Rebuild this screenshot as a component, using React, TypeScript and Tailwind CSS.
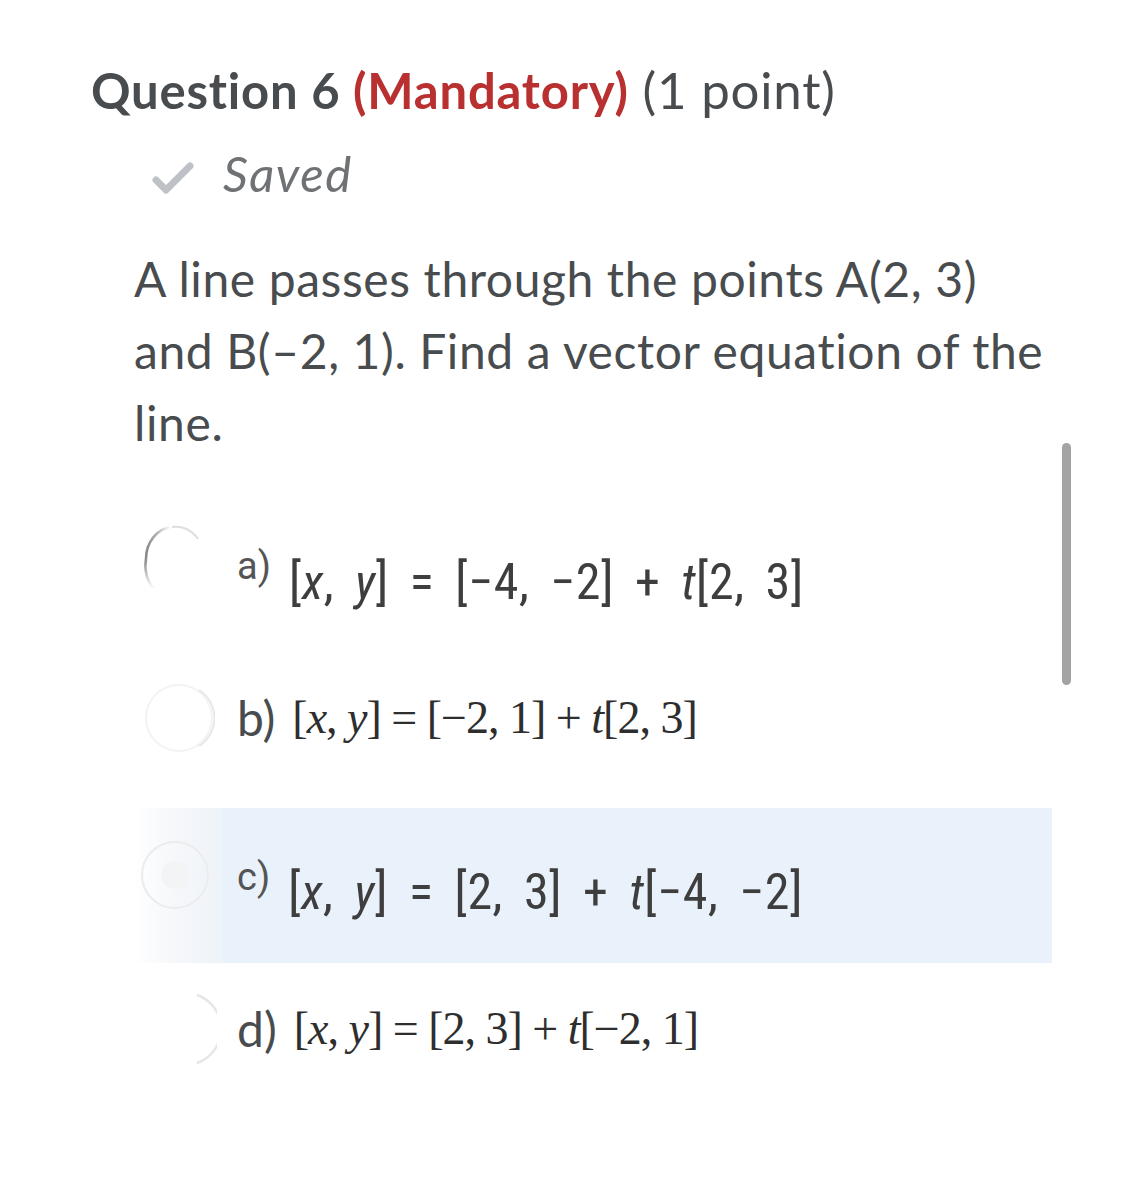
import React from "react";

const lato = { fontFamily: "Lato, 'Noto Sans', sans-serif" };

function MathSans({ children }: { children: React.ReactNode }) {
  return (
    <span
      className="text-[50px] leading-none text-[#3e3e3e] whitespace-pre tracking-[0.5px] [word-spacing:9px]"
      style={{ fontFamily: "'Liberation Sans Narrow', 'Roboto Condensed', Roboto, sans-serif" }}
    >
      {children}
    </span>
  );
}

function MathSerif({ children }: { children: React.ReactNode }) {
  return (
    <span
      className="text-[46px] leading-none text-[#2e2e2e] whitespace-pre tracking-[-1px]"
      style={{ fontFamily: "'Liberation Serif', 'DejaVu Serif', serif" }}
    >
      {children}
    </span>
  );
}

export default function App() {
  return (
    <div className="relative w-[1125px] h-[1179px] bg-white overflow-hidden" style={lato}>
      <div className="flex flex-col pt-[61px]">
        {/* Heading */}
        <div className="pl-[91px] h-[58px] leading-[58px] whitespace-nowrap text-[#494c4e] tracking-[0.8px]">
          <span className="text-[49px] font-bold">Question 6 </span>
          <span className="text-[49px] font-bold text-[#b8302f]">(Mandatory)</span>
          <span className="text-[51px]"> (1 point)</span>
        </div>

        {/* Saved */}
        <div className="mt-[26px] pl-[150px] h-[56px] flex items-center">
          <svg width="46" height="36" viewBox="0 0 46 36" className="mt-[10px]">
            <path d="M6 20 L16 30 L40 6" fill="none" stroke="#bec2c6" strokeWidth="7" strokeLinecap="round" strokeLinejoin="round" />
          </svg>
          <span className="ml-[27px] text-[49px] italic text-[#6f7275] leading-[56px] tracking-[1.5px]">Saved</span>
        </div>

        {/* Question text */}
        <p className="mt-[42px] ml-[134px] w-[925px] text-[48px] leading-[72px] text-[#494c4e] tracking-[0.6px]">
          A line passes through the points A(2, 3) and B(–2, 1). Find a vector equation of the line.
        </p>

        {/* Options */}
        <div className="mt-[34px] ml-[133px] w-[919px] flex flex-col">
          {/* a */}
          <div className="h-[155px] flex items-center">
            <div className="w-[104px] h-full flex items-center pl-[7px] pb-[20px]">
              <svg width="64" height="76" viewBox="0 0 64 76">
                <defs>
                  <linearGradient id="ga" x1="0" y1="0.5" x2="1" y2="0.2">
                    <stop offset="0" stopColor="#8a8a8a" />
                    <stop offset="0.5" stopColor="#b5b5b5" />
                    <stop offset="1" stopColor="#ffffff" />
                  </linearGradient>
                  <linearGradient id="gb" x1="0" y1="0" x2="0" y2="1">
                    <stop offset="0" stopColor="#8a8a8a" />
                    <stop offset="1" stopColor="#ffffff" />
                  </linearGradient>
                </defs>
                <path d="M32 4 A28 32 0 0 0 6 36" fill="none" stroke="url(#ga)" strokeWidth="2.5" />
                <path d="M32 4 A28 32 0 0 1 58 16" fill="none" stroke="#c8c8c8" strokeWidth="2" opacity="0.6" />
                <path d="M6 36 A28 32 0 0 0 14 66" fill="none" stroke="url(#gb)" strokeWidth="2.5" />
              </svg>
            </div>
            <span className="text-[38px] leading-none text-[#555] mb-[10px]" style={{ fontFamily: "Roboto, sans-serif" }}>a)</span>
            <span className="ml-[18px] mt-[22px]">
              <MathSans>
                [<i>x</i>, <i>y</i>] = [−4, −2] + <i>t</i>[2, 3]
              </MathSans>
            </span>
          </div>

          {/* b */}
          <div className="h-[160px] flex items-center pb-[20px]">
            <div className="w-[104px] flex items-center pl-[10px]">
              <svg width="72" height="72" viewBox="0 0 72 72">
                <circle cx="36" cy="36" r="33" fill="none" stroke="#f3f3f3" strokeWidth="2" />
                <path d="M56 8 A33 33 0 0 1 56 64" fill="none" stroke="#e8e8e8" strokeWidth="2" />
              </svg>
            </div>
            <span className="text-[48px] leading-none text-[#494c4e]">b)</span>
            <span className="ml-[17px]">
              <MathSerif>
                [<i>x</i>, <i>y</i>] = [−2, 1] + <i>t</i>[2, 3]
              </MathSerif>
            </span>
          </div>

          {/* c (highlighted) */}
          <div className="h-[155px] flex items-stretch">
            <div className="w-[89px] flex items-center pl-[6px] bg-gradient-to-r from-[#ffffff] via-[#f5f7fa] to-[#eef3f9]">
              <svg width="72" height="72" viewBox="0 0 72 72" className="mb-[22px]">
                <circle cx="36" cy="36" r="33" fill="none" stroke="#ececec" strokeWidth="2" />
                <circle cx="36" cy="36" r="14" fill="#f3f4f6" />
              </svg>
            </div>
            <div className="flex-1 flex items-center bg-[#e9f1fb] pl-[15px]">
              <span className="text-[38px] leading-none text-[#555] mb-[18px]" style={{ fontFamily: "Roboto, sans-serif" }}>c)</span>
              <span className="ml-[18px] mt-[12px]">
                <MathSans>
                  [<i>x</i>, <i>y</i>] = [2, 3] + <i>t</i>[−4, −2]
                </MathSans>
              </span>
            </div>
          </div>

          {/* d */}
          <div className="h-[155px] flex items-center pb-[24px]">
            <div className="w-[104px] flex items-center pl-[60px]">
              <svg width="24" height="76" viewBox="0 0 24 76">
                <path d="M4 4 A36 36 0 0 1 4 72" fill="none" stroke="#e6e6e6" strokeWidth="2.5" />
              </svg>
            </div>
            <span className="text-[48px] leading-none text-[#494c4e]">d)</span>
            <span className="ml-[17px]">
              <MathSerif>
                [<i>x</i>, <i>y</i>] = [2, 3] + <i>t</i>[−2, 1]
              </MathSerif>
            </span>
          </div>
        </div>
      </div>

      {/* Scrollbar overlay */}
      <div className="absolute left-[1062px] top-[443px] w-[9px] h-[242px] rounded-full bg-[#a3a3a3]" />
    </div>
  );
}
